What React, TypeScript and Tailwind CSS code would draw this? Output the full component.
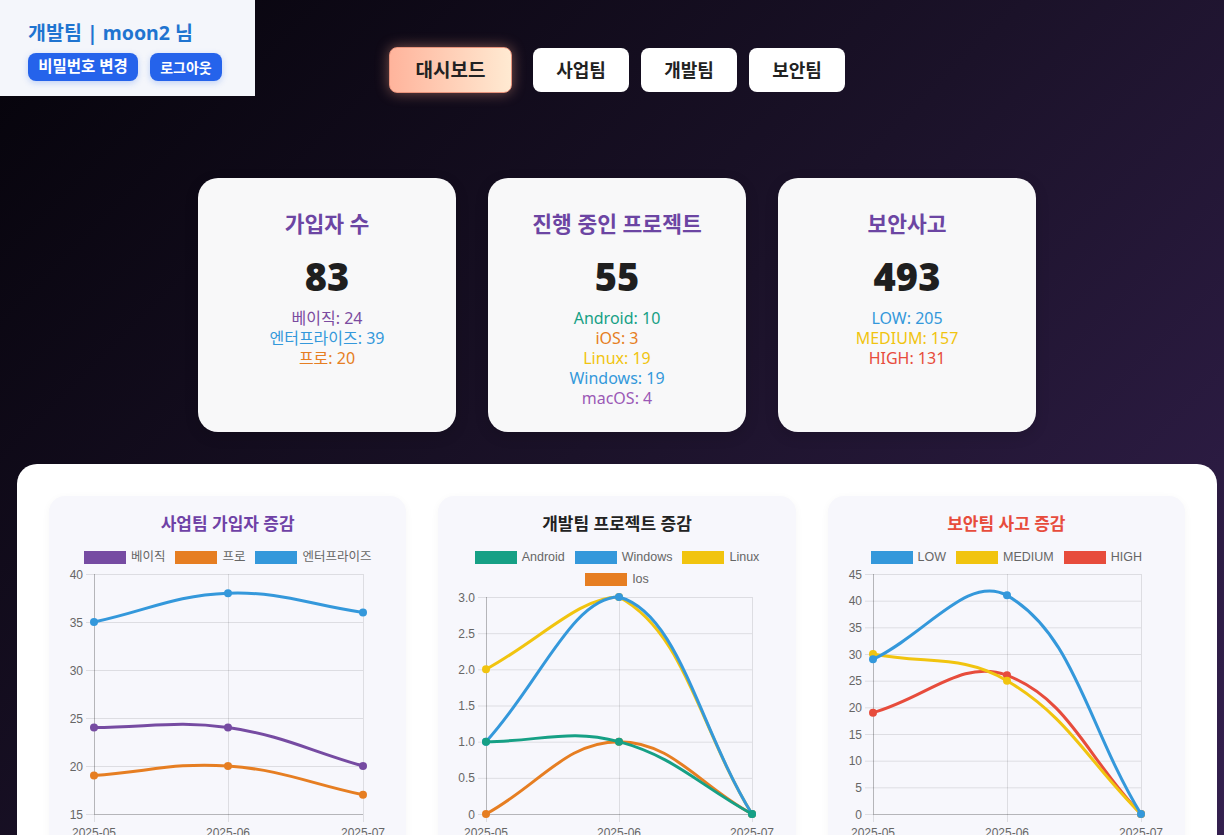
import React from "react";

type Pt = { x: number; y: number };
type Dataset = { label: string; color: string; data: number[] };
type ChartCfg = {
  title: string;
  titleColor: string;
  legendRows: string[][];
  xs: number[];
  min: number;
  max: number;
  step: number;
  fmt: (v: number) => string;
  plotTop: number;
  plotBottom: number;
  datasets: Dataset[];
};

const FONT_UI = '"Noto Sans", "Noto Sans CJK KR", sans-serif';
const FONT_CHART = '"Liberation Sans", "Noto Sans CJK KR", Arial, sans-serif';

function splinePath(pts: Pt[], tension: number, area: { l: number; r: number; t: number; b: number }) {
  const clampX = (v: number) => Math.max(Math.min(v, area.r), area.l);
  const clampY = (v: number) => Math.max(Math.min(v, area.b), area.t);
  const cps = pts.map((p, i) => {
    const prev = pts[i - 1] || p;
    const next = pts[i + 1] || p;
    const d01 = Math.hypot(p.x - prev.x, p.y - prev.y);
    const d12 = Math.hypot(next.x - p.x, next.y - p.y);
    let s01 = d01 / (d01 + d12);
    let s12 = d12 / (d01 + d12);
    if (isNaN(s01)) s01 = 0;
    if (isNaN(s12)) s12 = 0;
    const fa = tension * s01;
    const fb = tension * s12;
    return {
      prev: { x: clampX(p.x - fa * (next.x - prev.x)), y: clampY(p.y - fa * (next.y - prev.y)) },
      next: { x: clampX(p.x + fb * (next.x - prev.x)), y: clampY(p.y + fb * (next.y - prev.y)) },
    };
  });
  let d = `M ${pts[0].x} ${pts[0].y}`;
  for (let i = 1; i < pts.length; i++) {
    const a = cps[i - 1].next;
    const b = cps[i].prev;
    d += ` C ${a.x} ${a.y} ${b.x} ${b.y} ${pts[i].x} ${pts[i].y}`;
  }
  return d;
}

const COLORS: Record<string, string> = {
  베이직: "#764ba2",
  프로: "#e67e22",
  엔터프라이즈: "#3498db",
  Android: "#16a085",
  Windows: "#3498db",
  Linux: "#f1c40f",
  Ios: "#e67e22",
  LOW: "#3498db",
  MEDIUM: "#f1c40f",
  HIGH: "#e74c3c",
};

const charts: ChartCfg[] = [
  {
    title: "사업팀 가입자 증감",
    titleColor: "#6f42a6",
    legendRows: [["베이직", "프로", "엔터프라이즈"]],
    xs: [45, 179, 314],
    min: 15,
    max: 40,
    step: 5,
    fmt: (v) => String(v),
    plotTop: 6,
    plotBottom: 246,
    datasets: [
      { label: "베이직", color: "#764ba2", data: [24, 24, 20] },
      { label: "프로", color: "#e67e22", data: [19, 20, 17] },
      { label: "엔터프라이즈", color: "#3498db", data: [35, 38, 36] },
    ],
  },
  {
    title: "개발팀 프로젝트 증감",
    titleColor: "#222222",
    legendRows: [["Android", "Windows", "Linux"], ["Ios"]],
    xs: [48, 181, 314],
    min: 0,
    max: 3,
    step: 0.5,
    fmt: (v) => (v === 0 ? "0" : v.toFixed(1)),
    plotTop: 7,
    plotBottom: 224,
    datasets: [
      { label: "Android", color: "#16a085", data: [1, 1, 0] },
      { label: "Windows", color: "#3498db", data: [1, 3, 0] },
      { label: "Linux", color: "#f1c40f", data: [2, 3, 0] },
      { label: "Ios", color: "#e67e22", data: [0, 1, 0] },
    ],
  },
  {
    title: "보안팀 사고 증감",
    titleColor: "#e74c3c",
    legendRows: [["LOW", "MEDIUM", "HIGH"]],
    xs: [45, 179, 313],
    min: 0,
    max: 45,
    step: 5,
    fmt: (v) => String(v),
    plotTop: 6,
    plotBottom: 246,
    datasets: [
      { label: "LOW", color: "#3498db", data: [29, 41, 0] },
      { label: "MEDIUM", color: "#f1c40f", data: [30, 25, 0] },
      { label: "HIGH", color: "#e74c3c", data: [19, 26, 0] },
    ],
  },
];

const LABELS = ["2025-05", "2025-06", "2025-07"];

function LineChart({ cfg }: { cfg: ChartCfg }) {
  const { xs, min, max, step, plotTop, plotBottom } = cfg;
  const left = xs[0];
  const right = xs[xs.length - 1];
  const yOf = (v: number) => plotBottom - ((v - min) / (max - min)) * (plotBottom - plotTop);
  const ticks: number[] = [];
  for (let v = min; v <= max + 1e-9; v += step) ticks.push(Math.round(v * 100) / 100);
  const area = { l: left, r: right, t: plotTop, b: plotBottom };
  const drawOrder = [...cfg.datasets].reverse();
  return (
    <svg width="357" height={plotBottom + 30} className="block overflow-visible" style={{ fontFamily: FONT_CHART }}>
      {ticks.map((v) => (
        <g key={v}>
          <line x1={left - 8} x2={right} y1={yOf(v) + 0.5} y2={yOf(v) + 0.5} stroke="rgba(0,0,0,0.1)" strokeWidth="1" />
          <text x={left - 11} y={yOf(v) + 4.5} textAnchor="end" fontSize="12" fill="#666">
            {cfg.fmt(v)}
          </text>
        </g>
      ))}
      {xs.map((x, i) => (
        <g key={x}>
          <line x1={x + 0.5} x2={x + 0.5} y1={plotTop} y2={plotBottom + 8} stroke="rgba(0,0,0,0.1)" strokeWidth="1" />
          <text x={x} y={plotBottom + 23} textAnchor="middle" fontSize="12" fill="#666">
            {LABELS[i]}
          </text>
        </g>
      ))}
      <line x1={left + 0.5} x2={left + 0.5} y1={plotTop} y2={plotBottom} stroke="rgba(0,0,0,0.18)" strokeWidth="1" />
      <line x1={left} x2={right} y1={plotBottom + 0.5} y2={plotBottom + 0.5} stroke="rgba(0,0,0,0.18)" strokeWidth="1" />
      {drawOrder.map((ds) => {
        const pts = ds.data.map((v, i) => ({ x: xs[i], y: yOf(v) }));
        return (
          <g key={ds.label}>
            <path d={splinePath(pts, 0.4, area)} fill="none" stroke={ds.color} strokeWidth="3" strokeLinejoin="round" />
            {pts.map((p, i) => (
              <circle key={i} cx={p.x} cy={p.y} r="4" fill={ds.color} />
            ))}
          </g>
        );
      })}
    </svg>
  );
}

function ChartCard({ cfg }: { cfg: ChartCfg }) {
  return (
    <div className="rounded-2xl bg-[#f7f7fc] pt-4 h-[400px] shadow-[0_2px_8px_rgba(0,0,0,0.04)]">
      <div className="text-center text-[17px] leading-6 font-semibold" style={{ color: cfg.titleColor, fontFamily: FONT_UI }}>
        {cfg.title}
      </div>
      <div className="mt-[10px]">
        {cfg.legendRows.map((row, ri) => (
          <div key={ri} className="flex justify-center gap-x-[10px] h-[22px] items-center">
            {row.map((name) => (
              <div key={name} className="flex items-center gap-[5px]">
                <span className="block w-[42px] h-[13px]" style={{ backgroundColor: COLORS[name] }} />
                <span className="text-[12.5px] text-[#666] leading-none" style={{ fontFamily: FONT_CHART }}>
                  {name}
                </span>
              </div>
            ))}
          </div>
        ))}
      </div>
      <LineChart cfg={cfg} />
    </div>
  );
}

type StatLine = { text: string; color: string };
function StatCard({ title, value, lines }: { title: string; value: string; lines: StatLine[] }) {
  return (
    <div className="w-[258px] rounded-[20px] bg-[#f8f8f9] pt-8 pb-6 text-center shadow-[0_4px_14px_rgba(0,0,0,0.15)]">
      <div className="text-[21.5px] leading-7 font-semibold text-[#6c45a3]">{title}</div>
      <div className="mt-4 text-[38px] leading-[44px] font-black text-[#1f1f1f]">{value}</div>
      <div className="mt-[10px]">
        {lines.map((l) => (
          <div key={l.text} className="text-[16px] leading-5" style={{ color: l.color }}>
            {l.text}
          </div>
        ))}
      </div>
    </div>
  );
}

export default function App() {
  return (
    <div
      className="relative h-[835px] w-full overflow-hidden bg-[linear-gradient(135deg,#05030a_0%,#1b1229_50%,#34204f_100%)]"
      style={{ fontFamily: FONT_UI }}
    >
      {/* user box */}
      <div className="absolute left-0 top-0 w-[255px] h-[96px] bg-[#f4f6fb] pl-7 pt-[19px]">
        <div className="text-[19.5px] leading-[28px] font-bold text-[#1f74d0] whitespace-nowrap">개발팀 | moon2 님</div>
        <div className="mt-[6px] flex gap-3">
          <button className="h-[28px] w-[110px] rounded-lg bg-[#2563eb] text-white text-[15.5px] font-bold shadow-[0_2px_6px_rgba(37,99,235,0.25)]">
            비밀번호 변경
          </button>
          <button className="h-[28px] w-[72px] rounded-lg bg-[#2563eb] text-white text-[14px] font-semibold shadow-[0_2px_6px_rgba(37,99,235,0.25)]">
            로그아웃
          </button>
        </div>
      </div>

      <div className="pl-[10px]">
        {/* nav */}
        <div className="pt-[47px] flex justify-center items-center">
          <button className="w-[123px] h-[46px] mr-[21px] rounded-lg border border-[#e8937c] bg-[linear-gradient(90deg,#ffb49c,#ffead2)] text-[19px] font-bold text-[#222] shadow-[0_0_14px_rgba(255,170,140,0.45)]">
            대시보드
          </button>
          <button className="w-[96px] h-[44px] mr-3 rounded-lg bg-white text-[18px] font-bold text-[#222]">사업팀</button>
          <button className="w-[96px] h-[44px] mr-3 rounded-lg bg-white text-[18px] font-bold text-[#222]">개발팀</button>
          <button className="w-[96px] h-[44px] rounded-lg bg-white text-[18px] font-bold text-[#222]">보안팀</button>
        </div>

        {/* stat cards */}
        <div className="mt-[85px] flex justify-center gap-8">
          <StatCard
            title="가입자 수"
            value="83"
            lines={[
              { text: "베이직: 24", color: "#7b4ba0" },
              { text: "엔터프라이즈: 39", color: "#3498db" },
              { text: "프로: 20", color: "#e67e22" },
            ]}
          />
          <StatCard
            title="진행 중인 프로젝트"
            value="55"
            lines={[
              { text: "Android: 10", color: "#16a085" },
              { text: "iOS: 3", color: "#e67e22" },
              { text: "Linux: 19", color: "#f1c40f" },
              { text: "Windows: 19", color: "#3498db" },
              { text: "macOS: 4", color: "#9b59b6" },
            ]}
          />
          <StatCard
            title="보안사고"
            value="493"
            lines={[
              { text: "LOW: 205", color: "#3498db" },
              { text: "MEDIUM: 157", color: "#f1c40f" },
              { text: "HIGH: 131", color: "#e74c3c" },
            ]}
          />
        </div>

        {/* charts panel */}
        <div className="mt-8 mx-auto w-[1200px] rounded-[20px] bg-white p-8">
          <div className="grid grid-cols-3 gap-8">
            {charts.map((c) => (
              <ChartCard key={c.title} cfg={c} />
            ))}
          </div>
        </div>
      </div>
    </div>
  );
}
